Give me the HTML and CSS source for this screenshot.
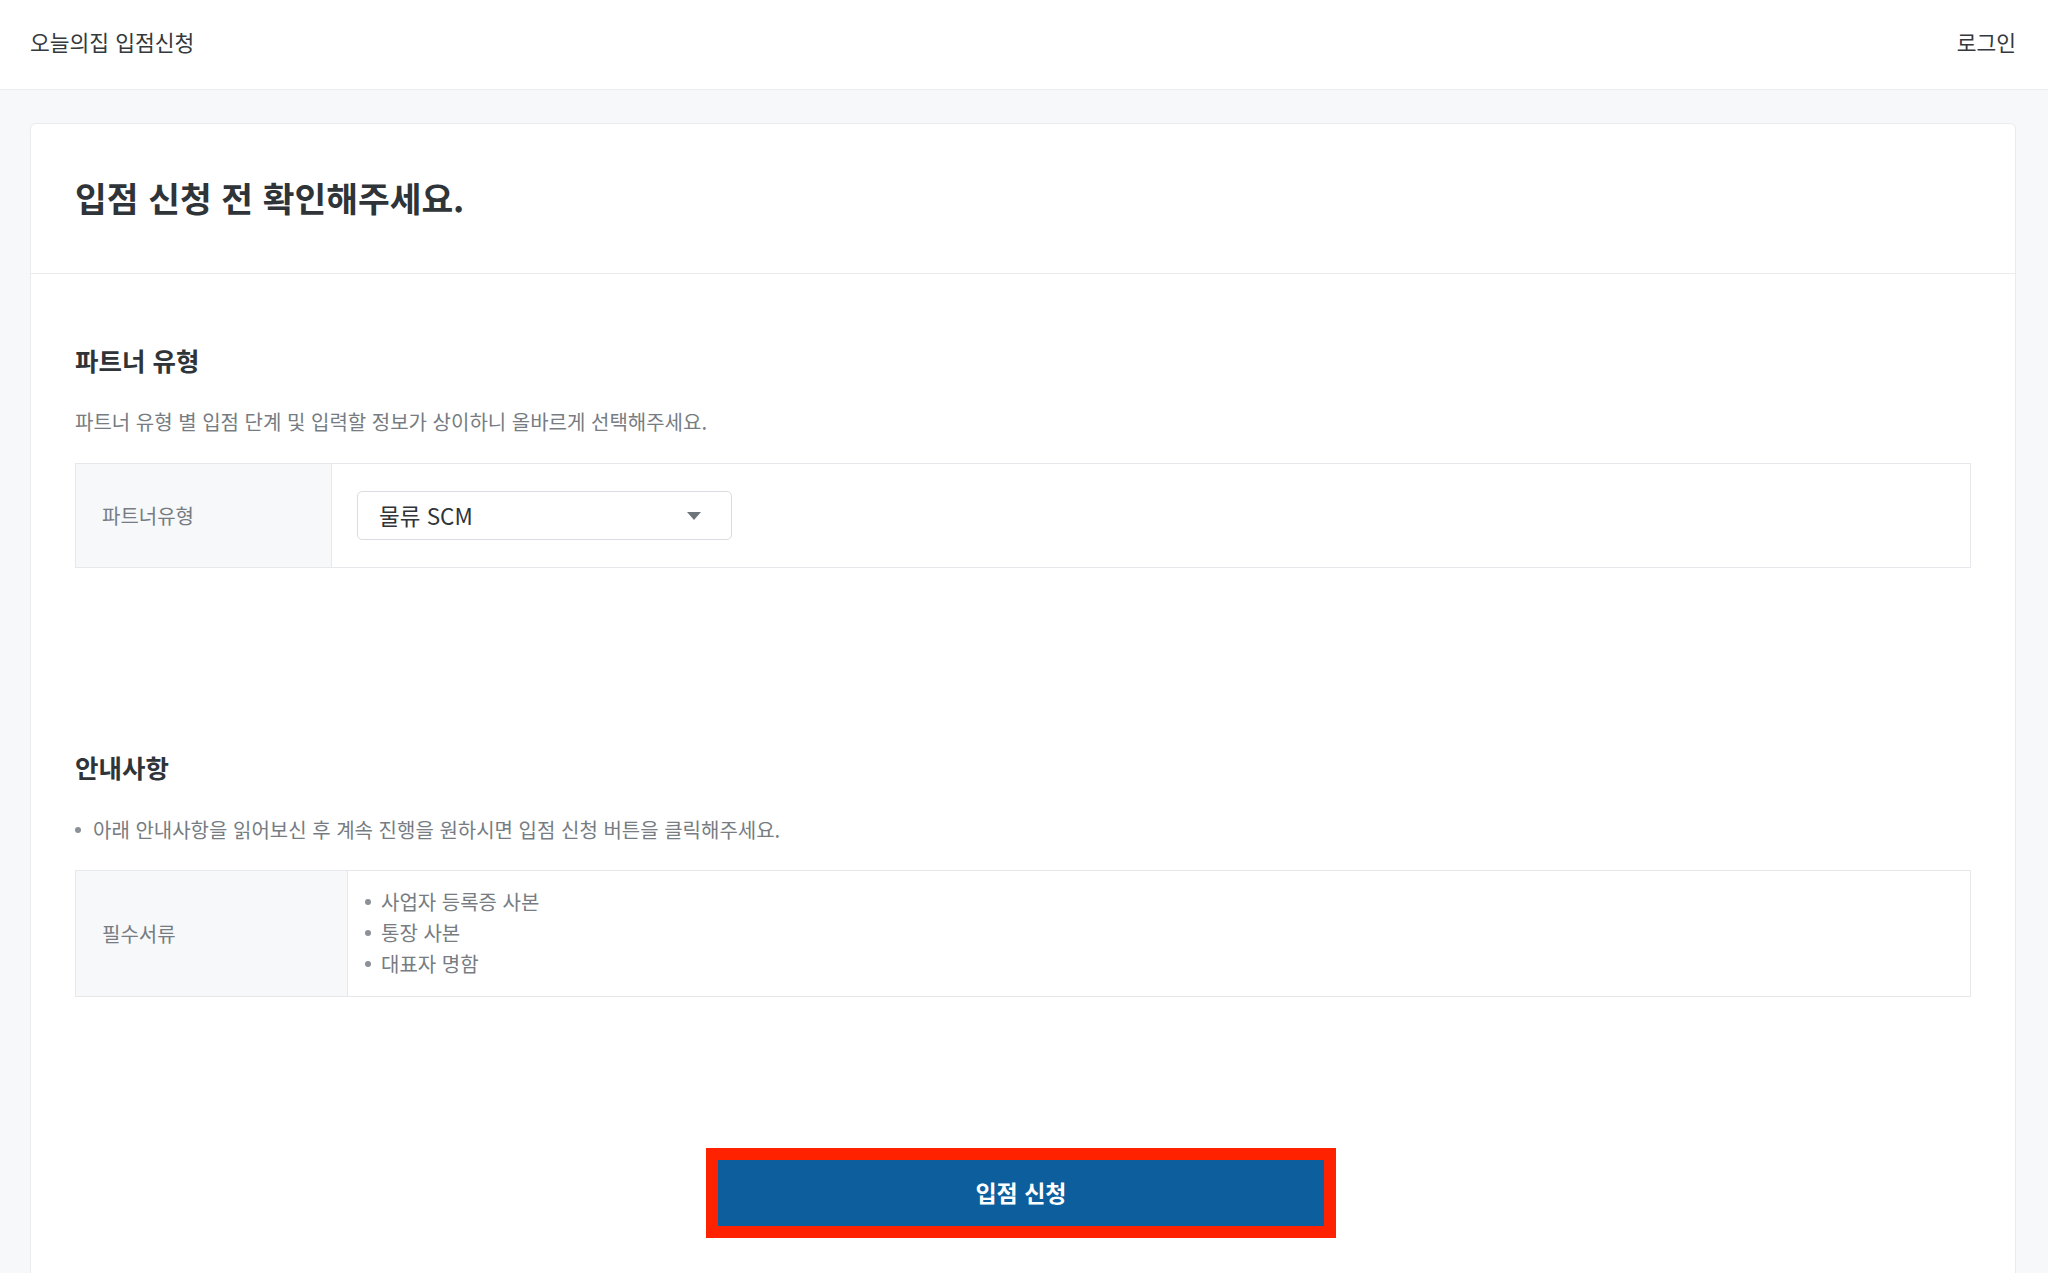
FILE: index.html
```html
<!DOCTYPE html>
<html lang="ko">
<head>
<meta charset="utf-8">
<title>오늘의집 입점신청</title>
<link rel="stylesheet" href="styles.css">
</head>
<body>
<header class="topbar">
  <div class="brand">오늘의집 입점신청</div>
  <a class="login">로그인</a>
</header>
<main class="page">
  <section class="card">
    <div class="card-head">
      <h1 class="title">입점 신청 전 확인해주세요.</h1>
    </div>
    <div class="card-body">
      <h2 class="sec-title">파트너 유형</h2>
      <p class="desc">파트너 유형 별 입점 단계 및 입력할 정보가 상이하니 올바르게 선택해주세요.</p>
      <div class="info-table type-table">
        <div class="label">파트너유형</div>
        <div class="value select-cell">
          <div class="select">
            <span>물류 SCM</span>
            <span class="caret"></span>
          </div>
        </div>
      </div>

      <h2 class="sec-title notice-title">안내사항</h2>
      <p class="desc bullet-line"><span class="dot"></span>아래 안내사항을 읽어보신 후 계속 진행을 원하시면 입점 신청 버튼을 클릭해주세요.</p>
      <div class="info-table doc-table">
        <div class="label">필수서류</div>
        <ul class="value doc-list">
          <li><span class="dot"></span>사업자 등록증 사본</li>
          <li><span class="dot"></span>통장 사본</li>
          <li><span class="dot"></span>대표자 명함</li>
        </ul>
      </div>

      <div class="actions">
        <button class="apply">입점 신청</button>
      </div>
    </div>
  </section>
</main>
</body>
</html>
```
FILE: styles.css
```css
* { box-sizing: border-box; }

html, body {
  margin: 0;
  padding: 0;
}

body {
  background: #f7f8fa;
  font-family: "Noto Sans CJK KR", "Noto Sans", sans-serif;
  color: #2f3438;
  overflow: hidden;
}

.topbar {
  height: 90px;
  background: #ffffff;
  border-bottom: 1px solid #eaedef;
  display: flex;
  align-items: center;
  justify-content: space-between;
  padding: 0 32px 6px 30px;
}

.brand, .login {
  font-size: 21.5px;
  color: #34393d;
  line-height: 30px;
}

.page {
  padding: 33px 32px 0 30px;
}

.card {
  background: #ffffff;
  border: 1px solid #e9ebee;
  border-radius: 6px 6px 0 0;
}

.card-head {
  height: 150px;
  display: flex;
  align-items: center;
  padding: 0 44px 4px;
  border-bottom: 1px solid #e9ebee;
}

.title {
  margin: 0;
  font-size: 34.5px;
  font-weight: 700;
  line-height: 46px;
  color: #2f3438;
}

.card-body {
  padding: 69px 44px 300px;
}

.sec-title {
  margin: 0;
  font-size: 25.5px;
  font-weight: 700;
  line-height: 34px;
  color: #2f3438;
}

.desc {
  margin: 31px 0 27px;
  font-size: 20px;
  line-height: 28px;
  color: #767c82;
}

.info-table {
  display: grid;
  border: 1px solid #e6e8eb;
}

.type-table { grid-template-columns: 256px 1fr; }
.doc-table { grid-template-columns: 272px 1fr; }

.label {
  background: #f7f8fa;
  border-right: 1px solid #e6e8eb;
  display: flex;
  align-items: center;
  padding: 0 26px;
  font-size: 20px;
  color: #767c82;
}

.select-cell {
  padding: 27px 25px;
}

.select {
  width: 375px;
  height: 49px;
  border: 1px solid #d9dce0;
  border-radius: 5px;
  display: flex;
  align-items: center;
  justify-content: space-between;
  padding: 0 30px 2px 21px;
  font-size: 22.5px;
  color: #2f3438;
}

.caret {
  width: 0;
  height: 0;
  border-left: 7.5px solid transparent;
  border-right: 7.5px solid transparent;
  border-top: 8px solid #6d757b;
  margin-top: 2px;
}

.notice-title {
  margin-top: 182px;
}

.bullet-line {
  display: flex;
  align-items: center;
  margin: 32px 0 26px;
}

.dot {
  display: inline-block;
  width: 6px;
  height: 6px;
  border-radius: 50%;
  background: #8b9197;
  margin-right: 12px;
  flex: none;
}

.doc-list {
  margin: 0;
  list-style: none;
  padding: 15px 0 17px 17px;
}

.doc-list li {
  display: flex;
  align-items: center;
  font-size: 20px;
  line-height: 31px;
  color: #767c82;
}

.doc-list .dot {
  margin-right: 10px;
}

.actions {
  display: flex;
  justify-content: center;
  padding-top: 163px;
}

.apply {
  width: 606px;
  height: 66px;
  border: none;
  background: #0c5e9c;
  color: #ffffff;
  font-family: inherit;
  font-size: 23px;
  font-weight: 700;
  outline: 12px solid #ff2200;
  margin-right: 4px;
  padding: 0 0 3px;
}
```
